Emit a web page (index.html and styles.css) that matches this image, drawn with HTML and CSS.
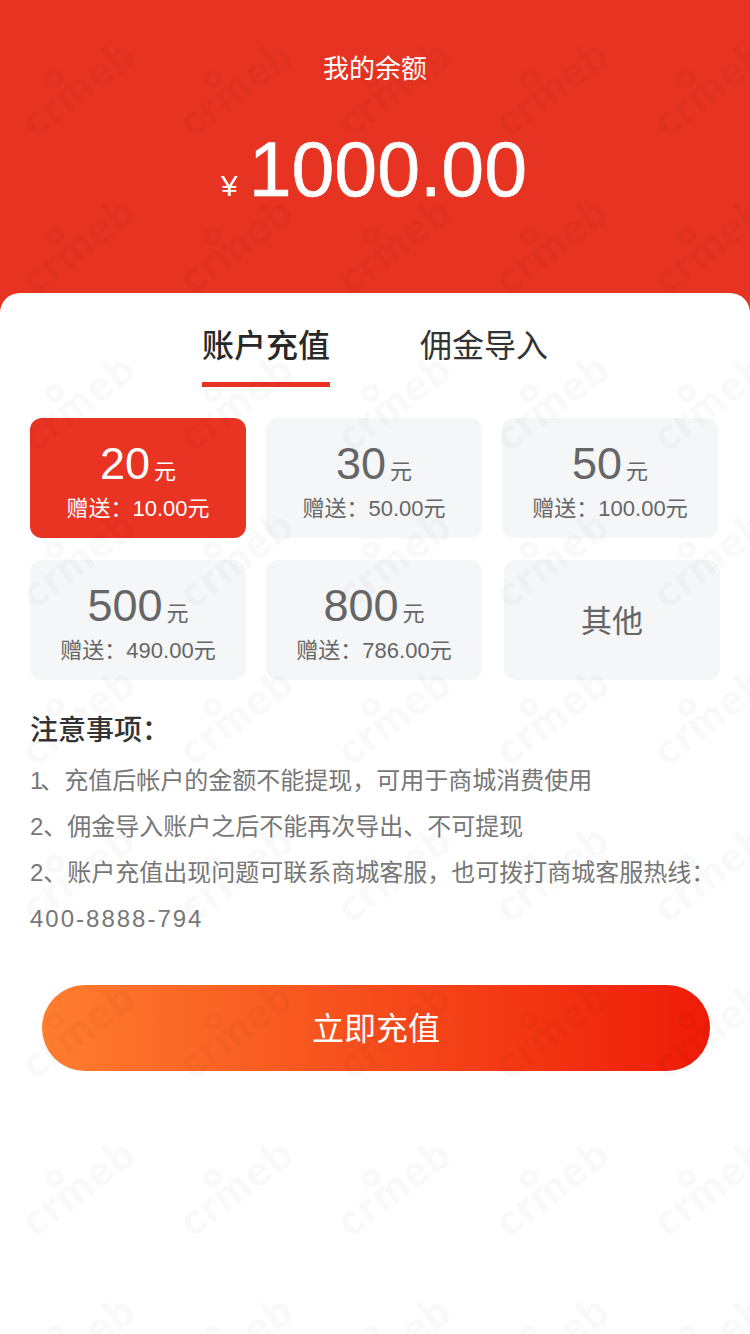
FILE: index.html
```html
<!DOCTYPE html>
<html lang="zh-CN">
<head>
  <meta charset="UTF-8" />
  <meta name="viewport" content="width=device-width, initial-scale=1.0" />
  <title>我的余额</title>
  <link rel="stylesheet" href="styles.css">
</head>
<body>
  <div class="page">
    <div class="balance">
      <div class="balance-label">我的余额</div>
      <div class="balance-value"><span class="yen">¥</span>1000.00</div>
    </div>

    <div class="card">
      <div class="tabs">
        <div class="tab active">账户充值</div>
        <div class="tab">佣金导入</div>
      </div>

      <div class="amounts">
        <div class="amount selected">
          <div class="amount-num">20<span class="unit">元</span></div>
          <div class="amount-gift">赠送：10.00元</div>
        </div>
        <div class="amount">
          <div class="amount-num">30<span class="unit">元</span></div>
          <div class="amount-gift">赠送：50.00元</div>
        </div>
        <div class="amount">
          <div class="amount-num">50<span class="unit">元</span></div>
          <div class="amount-gift">赠送：100.00元</div>
        </div>
        <div class="amount">
          <div class="amount-num">500<span class="unit">元</span></div>
          <div class="amount-gift">赠送：490.00元</div>
        </div>
        <div class="amount">
          <div class="amount-num">800<span class="unit">元</span></div>
          <div class="amount-gift">赠送：786.00元</div>
        </div>
        <div class="amount other">其他</div>
      </div>

      <div class="notes">
        <div class="notes-title">注意事项：</div>
        <p><span class="narrow">1</span>、充值后帐户的金额不能提现，可用于商城消费使用</p>
        <p>2、佣金导入账户之后不能再次导出、不可提现</p>
        <p>2、账户充值出现问题可联系商城客服，也可拨打商城客服热线：</p>
        <p class="phone">400-8888-794</p>
      </div>

      <div class="submit">立即充值</div>
    </div>
  </div>

  <svg class="watermark" width="750" height="1334" aria-hidden="true">
    <defs>
      <pattern id="mark" width="158" height="157" patternUnits="userSpaceOnUse">
        <g transform="translate(35 139) rotate(-37)">
          <text class="mark-text" x="0" y="0">crmeb</text>
          <circle class="mark-dot" cx="52" cy="-36" r="6.5" />
        </g>
      </pattern>
    </defs>
    <rect width="750" height="1334" fill="url(#mark)" />
  </svg>
</body>
</html>
```

FILE: styles.css
```css
html, body {
  margin: 0;
  padding: 0;
  height: 100%;
  background: #fff;
  font-family: "Liberation Sans", "Noto Sans CJK SC", sans-serif;
  overflow: hidden;
}

.page {
  height: 1334px;
}

.balance {
  height: 313px;
  background: #e63322;
  color: #fff;
  text-align: center;
  box-sizing: border-box;
  padding-top: 51px;
}

.balance-label {
  font-size: 26px;
  line-height: 36px;
}

.balance-value {
  margin-top: 38px;
  padding-right: 2px;
  font-size: 77px;
  line-height: 88px;
  -webkit-text-stroke: 0.6px #fff;
}

.yen {
  font-size: 30px;
  margin-right: 11px;
  -webkit-text-stroke: 0;
}

.card {
  margin-top: -20px;
  position: relative;
  background: #fff;
  border-radius: 20px 20px 0 0;
  padding-top: 30px;
}

.tabs {
  display: flex;
  justify-content: center;
  gap: 90px;
}

.tab {
  width: 128px;
  height: 59px;
  font-size: 32px;
  line-height: 46px;
  color: #333;
  white-space: nowrap;
}

.tab.active {
  font-weight: 500;
  color: #282828;
  border-bottom: 5px solid #e83323;
}

.amounts {
  display: grid;
  grid-template-columns: repeat(3, 216px);
  grid-auto-rows: 120px;
  column-gap: 20px;
  row-gap: 22px;
  padding: 31px 0 0 30px;
}

.amount {
  background: #f4f6f8;
  border-radius: 12px;
  color: #666;
  text-align: center;
}

.amount.selected {
  background: #e93323;
  color: #fff;
}

.amount-num {
  padding-top: 20px;
  font-size: 45px;
  line-height: 52px;
}

.unit {
  font-size: 22px;
  margin-left: 4px;
}

.amount-gift {
  margin-top: -5px;
  font-size: 22px;
  line-height: 32px;
}

.amount.other {
  display: flex;
  align-items: center;
  justify-content: center;
  box-sizing: border-box;
  padding-bottom: 4px;
  font-size: 31px;
  margin: 0 -2px 0 2px;
}

.notes {
  padding: 30px 0 0 30px;
  font-size: 24px;
  line-height: 46px;
  color: #777;
}

.notes-title {
  font-size: 28px;
  font-weight: 500;
  line-height: 42px;
  color: #333;
  margin-bottom: 6px;
}

.notes p {
  margin: 0;
  white-space: nowrap;
}

.narrow {
  letter-spacing: -3px;
}

.phone {
  letter-spacing: 2px;
}

.submit {
  width: 668px;
  height: 86px;
  margin: 43px 0 0 42px;
  border-radius: 43px;
  background: linear-gradient(90deg, #fe7d2f, #ee1b08);
  color: #fff;
  font-size: 32px;
  line-height: 89px;
  text-align: center;
}

.watermark {
  position: absolute;
  top: 0;
  left: 0;
  pointer-events: none;
}

.mark-text {
  font-family: Lato, sans-serif;
  font-weight: 900;
  font-size: 43px;
  letter-spacing: 2px;
  fill: #000;
  opacity: 0.022;
}

.mark-dot {
  fill: none;
  stroke: #000;
  stroke-width: 5;
  opacity: 0.022;
}
```
